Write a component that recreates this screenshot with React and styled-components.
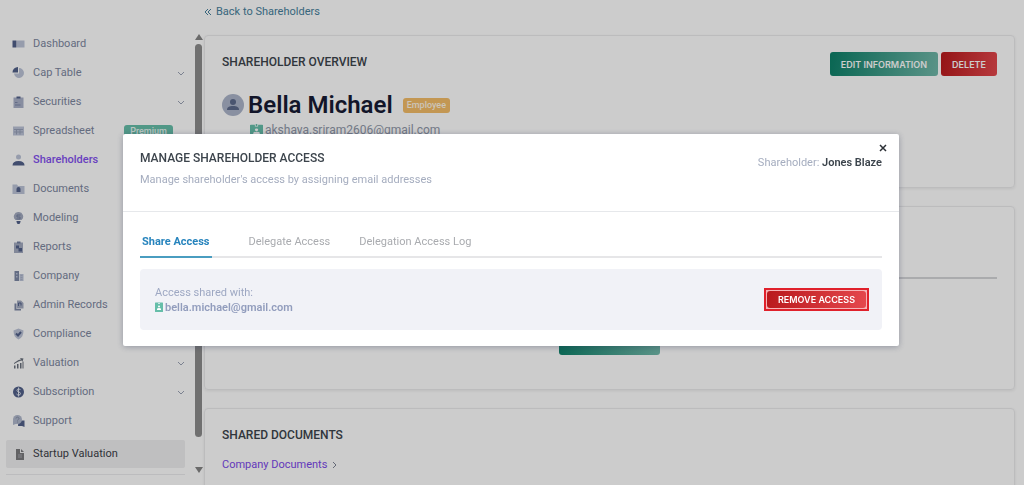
import React, { useState } from 'react';
import styled, { createGlobalStyle } from 'styled-components';

const GlobalStyle = createGlobalStyle`
  * {
    box-sizing: border-box;
  }

  body {
    margin: 0;
    background: #ffffff;
    font-family: Roboto, "Noto Sans", sans-serif;
    font-size: 11px;
    line-height: 16px;
    color: #3c444c;
  }

  button {
    font-family: inherit;
    cursor: pointer;
  }

  a {
    text-decoration: none;
  }

  h1, h2, p, ul {
    margin: 0;
    padding: 0;
  }
`;

const Page = styled.div`
  display: flex;
  height: 100vh;
  overflow: hidden;
`;

const Sidebar = styled.nav`
  flex: 0 0 194px;
  padding: 29px 9px 0 6px;
`;

const NavList = styled.ul`
  list-style: none;
`;

const NavLink = styled.a`
  display: flex;
  align-items: center;
  gap: 8px;
  height: 29px;
  padding: 0 0 0 6px;
  color: ${props => props.$active ? '#8350f0' : '#7d879f'};
  font-weight: ${props => props.$active ? 500 : 400};

  svg {
    flex: none;
  }
`;

const NavLabel = styled.span`
  flex: 1;
`;

const Premium = styled.span`
  width: 49px;
  margin-right: 12px;
  border-radius: 3px;
  background: #66bea9;
  color: #e9f7f3;
  font-size: 9px;
  font-weight: 500;
  line-height: 12px;
  text-align: center;
`;

const StartupLink = styled.a`
  display: flex;
  align-items: center;
  gap: 8px;
  height: 28px;
  margin-top: 5px;
  padding-left: 7px;
  border-radius: 2px;
  background: #efeff0;
  color: #3c4148;
`;

const SidebarRule = styled.div`
  margin-top: 6px;
  border-top: 1px solid #ececee;
`;

const Scrollbar = styled.div`
  flex: 0 0 10px;
  display: flex;
  flex-direction: column;
  align-items: center;
  gap: 3px;
  height: 474px;
  padding: 33px 1px 0 0;
`;

const Thumb = styled.div`
  flex: 1;
  width: 7px;
  margin-bottom: 26px;
  border-radius: 4px;
  background: #8c8c8c;
`;

const Main = styled.main`
  flex: 1;
  display: flex;
  flex-direction: column;
  padding-right: 9px;
`;

const BackLink = styled.a`
  flex: none;
  display: flex;
  align-items: center;
  gap: 4px;
  height: 35px;
  padding-bottom: 11px;
  color: #46809c;
`;

const Card = styled.section`
  flex: none;
  margin-bottom: 18px;
  padding: 16px 17px 0;
  min-height: ${props => props.$height}px;
  border: 1px solid #ebebed;
  border-radius: 4px;
  box-shadow: 0 1px 3px rgba(0, 0, 0, 0.08);
`;

const CardTitle = styled.h2`
  padding-top: 2px;
  font-size: 12px;
  font-weight: 500;
  line-height: 16px;
`;

const CardHeader = styled.div`
  display: flex;
  justify-content: space-between;
`;

const Actions = styled.div`
  display: flex;
  gap: 3px;
`;

const Button = styled.button`
  height: 24px;
  padding: 0 11px;
  border: 0;
  border-radius: 3px;
  background: ${props => props.$danger
    ? 'linear-gradient(100deg, #b9191c, #e5484d)'
    : 'linear-gradient(100deg, #0c8068, #72b9aa)'};
  color: #ffffff;
  font-family: Inter, sans-serif;
  font-size: 9px;
  font-weight: 600;
  text-transform: uppercase;
`;

const Person = styled.div`
  display: flex;
  align-items: center;
  gap: 4px;
  margin-top: 16px;
`;

const Name = styled.h1`
  margin-right: 6px;
  color: #171b34;
  font-size: 24px;
  font-weight: 600;
  line-height: 26px;
`;

const Tag = styled.span`
  padding: 0 4px;
  border-radius: 3px;
  background: #f4bd68;
  color: #fff6e6;
  font-size: 9px;
  font-weight: 500;
  line-height: 15px;
`;

const PersonEmail = styled.p`
  display: flex;
  align-items: center;
  gap: 2px;
  margin: 4px 0 0 28px;
  color: #8f97a8;
  font-size: 12px;
`;

const TabRule = styled.div`
  margin-top: 54px;
  border-top: 2px solid #d5d6d9;
`;

const CenteredAction = styled.div`
  display: flex;
  justify-content: center;
  margin-top: 52px;

  button {
    width: 101px;
  }
`;

const DocumentsLink = styled.a`
  display: flex;
  align-items: center;
  gap: 4px;
  margin-top: 14px;
  color: #7c48ea;
`;

const Overlay = styled.div`
  position: fixed;
  inset: 0;
  padding: 134px 125px 0 123px;
  background: rgba(0, 0, 0, 0.2);
`;

const Dialog = styled.div`
  border-radius: 2px;
  background: #ffffff;
  box-shadow: 0 1px 6px rgba(40, 50, 80, 0.35);
`;

const DialogHeader = styled.div`
  display: flex;
  justify-content: space-between;
  height: 78px;
  padding: 9px 17px 0;
  border-bottom: 1px solid #e6e8eb;
`;

const DialogTitle = styled.h2`
  padding-top: 7px;
  font-size: 12px;
  font-weight: 500;
  line-height: 16px;
`;

const Subtitle = styled.p`
  margin-top: 6px;
  color: #a5adbf;
`;

const DialogSide = styled.div`
  display: flex;
  flex-direction: column;
  align-items: flex-end;
  gap: 2px;
  color: #a5adbf;

  strong {
    color: #3c444c;
    font-weight: 600;
  }
`;

const Close = styled.button`
  display: flex;
  width: 10px;
  height: 10px;
  margin-right: -6px;
  padding: 0;
  border: 0;
  background: none;
`;

const DialogBody = styled.div`
  padding: 22px 17px 16px;
`;

const Tabs = styled.div`
  display: flex;
  gap: 25px;
  border-bottom: 2px solid #e6e6e8;
`;

const Tab = styled.button`
  height: 24px;
  margin-bottom: -2px;
  padding: 0 2px 6px;
  border: 0;
  border-bottom: 2px solid ${props => props.$active ? '#4a9dc0' : 'transparent'};
  background: none;
  color: ${props => props.$active ? '#2784bd' : '#a9abaf'};
  font-size: 11px;
  font-weight: ${props => props.$active ? 700 : 400};
  line-height: 16px;

  &:first-child {
    margin-right: 10px;
  }
`;

const AccessBox = styled.div`
  display: flex;
  align-items: center;
  justify-content: space-between;
  height: 61px;
  margin-top: 11px;
  padding: 0 13px 0 15px;
  border-radius: 4px;
  background: #f1f2f7;
  color: #9ea8c3;
`;

const AccessText = styled.p`
  line-height: 15px;
`;

const AccessEmail = styled.p`
  display: flex;
  align-items: center;
  gap: 2px;
  color: #929dbd;
  font-weight: 600;
  line-height: 15px;
`;

const Highlight = styled.div`
  display: flex;
  border: 2px solid #e0212b;
  background: #f6b4b7;
  padding: 1px;

  button {
    height: 17px;
  }
`;

const dark = '#52618a';
const light = '#bcc4d8';

const icons = {
  dashboard: <><path fill={light} d="M9 5h15v14H9z" /><path fill={dark} d="M0 5h8v14H0z" /></>,
  pie: <><path fill={light} d="M13 2a10 10 0 1 1-10 11h10z" /><path fill={dark} d="M11 0v11H0A11 11 0 0 1 11 0z" /></>,
  clipboard: <><path fill="#a9b1c8" d="M2 3h20v21H2z" /><path fill={dark} d="M8 1h8v4H8z" /><path fill="#7c88a8" d="M5 12h5v2H5zM5 17h11v2H5z" /></>,
  sheet: <><path fill={light} d="M1 3h22v18H1z" /><path stroke="#98a1b8" strokeWidth="2" fill="none" d="M3 9h18M3 14h18M8 9v10M15 9v10" /></>,
  user: <><circle fill={light} cx="12" cy="6" r="5" /><path fill={dark} d="M0 23c0-6 4-9 12-9s12 3 12 9z" /></>,
  folder: <><path fill={light} d="M0 3h9l2 3h13v16H0z" /><path fill={dark} d="M8 12a4 4 0 0 1 8 0v6H8z" /></>,
  bulb: <><path fill="#a3abc0" d="M12 0a9 9 0 0 0-6 16h12a9 9 0 0 0-6-16z" /><path fill={dark} d="M8 18h8v2l-2 4h-4l-2-4z" /><path stroke="#7480a0" strokeWidth="2" fill="none" d="M16 6H9v4h6v4H8" /></>,
  report: <><path fill="#a3abc0" d="M3 3h18v21H3z" /><path fill="#7480a0" d="M9 1h7v4H9z" /><path fill={dark} d="M7 9h6v6H7zM12 14h7v7h-7z" /></>,
  building: <><path fill="#7e89a6" d="M4 2h9v20H4z" /><path fill={light} d="M14 8h8v14h-8zM7 6h3v3H7zM7 12h3v3H7z" /><path stroke="#98a1b8" d="M16 11h4M16 15h4M16 19h4" /></>,
  records: <><path fill="#a3abc0" d="M9 3h8l5 5v11H9z" /><path fill="#7e89a6" d="M4 9h4v11h9v3H4z" /><path fill="none" stroke={dark} strokeWidth="2" d="M12 14V8h5v5" /></>,
  shield: <><path fill={light} d="M12 1l10 4c0 9-3 15-10 18C5 20 2 14 2 5z" /><path fill="none" stroke={dark} strokeWidth="4" d="M7 11l4 4 6-7" /></>,
  growth: <path fill="#6a717d" d="M3 17h3v6H3zM9 14h3v9H9zM15 12h3v11h-3zM20 9h2v14h-2zM3 12l9-6 5-1-2-3 7 1-2 6-2-2-6 2-9 5z" />,
  dollar: <><circle fill={dark} cx="12" cy="12" r="11" /><path fill="none" stroke="#dfe4ee" strokeWidth="2" d="M16 8c-1-3-7-3-7 1s7 2 7 6-6 4-8 1M12 3v18" /></>,
  chat: <><path fill={dark} d="M12 11h12v13l-5-2h-8z" /><circle fill="#b0b8cc" cx="10" cy="9" r="9" /><path fill="#b0b8cc" d="M1 10v10l8-3z" /><path fill="none" stroke="#8790a8" strokeWidth="2" d="M7 7c0-4 6-3 6 0 0 2-3 2-3 4M10 13v2" /></>,
};

const navItems = [
  { label: 'Dashboard', icon: 'dashboard' },
  { label: 'Cap Table', icon: 'pie', expands: true },
  { label: 'Securities', icon: 'clipboard', expands: true },
  { label: 'Spreadsheet', icon: 'sheet', premium: true },
  { label: 'Shareholders', icon: 'user', active: true },
  { label: 'Documents', icon: 'folder' },
  { label: 'Modeling', icon: 'bulb' },
  { label: 'Reports', icon: 'report' },
  { label: 'Company', icon: 'building' },
  { label: 'Admin Records', icon: 'records' },
  { label: 'Compliance', icon: 'shield' },
  { label: 'Valuation', icon: 'growth', expands: true },
  { label: 'Subscription', icon: 'dollar', expands: true },
  { label: 'Support', icon: 'chat' },
];

const tabs = ['Share Access', 'Delegate Access', 'Delegation Access Log'];

const NavIcon = ({ name }) => (
  <svg width="13" height="12" viewBox="0 0 24 24" aria-hidden="true">{ icons[name] }</svg>
);

const Chevron = () => (
  <svg width="8" height="8" viewBox="0 0 8 8" fill="none" stroke="#9aa2b5" aria-hidden="true">
    <path d="M1 3l3 3 3-3" />
  </svg>
);

const Badge = ({ width, height }) => (
  <svg width={ width } height={ height } viewBox="0 0 16 20" preserveAspectRatio="none" aria-hidden="true">
    <path fill="#66bea9" d="M1 1h5v3h4V1h5q1 0 1 1v17q0 1-1 1H1q-1 0-1-1V2q0-1 1-1zM7 0h2v3H7z" />
    <circle cx="8" cy="9" r="2" fill="#ffffff" />
    <path fill="#ffffff" d="M4 16v-2q0-2 4-2t4 2v2z" />
  </svg>
);

function App() {
  const [open, setOpen] = useState(true);
  const [tab, setTab] = useState(tabs[0]);

  return (
    <>
      <GlobalStyle />
      <Page>
        <Sidebar>
          <NavList>
            { navItems.map(item => (
              <li key={ item.label }>
                <NavLink href="#" $active={ item.active }>
                  <NavIcon name={ item.icon } />
                  <NavLabel>{ item.label }</NavLabel>
                  { item.expands && <Chevron /> }
                  { item.premium && <Premium>Premium</Premium> }
                </NavLink>
              </li>
            )) }
          </NavList>
          <StartupLink href="#">
            <svg width="12" height="12" viewBox="0 0 12 12" aria-hidden="true">
              <path fill="#7b7b7e" d="M3 1h4v4h4v7H3z" />
              <path fill="#7b7b7e" d="M8 1l3 3H8z" />
              <path stroke="#aaaaae" d="M5 7h4M5 9h4" />
            </svg>
            Startup Valuation
          </StartupLink>
          <SidebarRule />
        </Sidebar>

        <Scrollbar aria-hidden="true">
          <svg width="8" height="8" viewBox="0 0 8 8"><path fill="#858585" d="M4 1l4 6H0z" /></svg>
          <Thumb />
          <svg width="8" height="8" viewBox="0 0 8 8"><path fill="#858585" d="M4 7L0 1h8z" /></svg>
        </Scrollbar>

        <Main>
          <BackLink href="#">
            <svg width="8" height="8" viewBox="0 0 8 8" fill="none" stroke="currentColor" aria-hidden="true">
              <path d="M4 1L1 4l3 3M7 1L4 4l3 3" />
            </svg>
            Back to Shareholders
          </BackLink>

          <Card $height={ 153 }>
            <CardHeader>
              <CardTitle>SHAREHOLDER OVERVIEW</CardTitle>
              <Actions>
                <Button>Edit Information</Button>
                <Button $danger>Delete</Button>
              </Actions>
            </CardHeader>
            <Person>
              <svg width="22" height="22" viewBox="0 0 22 22" aria-hidden="true">
                <circle cx="11" cy="11" r="11" fill="#acb5ca" />
                <circle cx="11" cy="8" r="3" fill="#5d6b8c" />
                <path fill="#5d6b8c" d="M5 16c0-3 2-4 6-4s6 1 6 4z" />
              </svg>
              <Name>Bella Michael</Name>
              <Tag>Employee</Tag>
            </Person>
            <PersonEmail>
              <Badge width={ 13 } height={ 13 } />
              akshaya.sriram2606@gmail.com
            </PersonEmail>
          </Card>

          <Card $height={ 184 }>
            <TabRule />
            <CenteredAction>
              <Button aria-label="Manage access" />
            </CenteredAction>
          </Card>

          <Card $height={ 120 }>
            <CardTitle>SHARED DOCUMENTS</CardTitle>
            <DocumentsLink href="#">
              Company Documents
              <svg width="8" height="8" viewBox="0 0 8 8" fill="none" stroke="#7d8494" aria-hidden="true">
                <path d="M2 1l3 3-3 3" />
              </svg>
            </DocumentsLink>
          </Card>
        </Main>
      </Page>

      { open && (
        <Overlay>
          <Dialog role="dialog" aria-labelledby="dialog-title">
            <DialogHeader>
              <div>
                <DialogTitle id="dialog-title">MANAGE SHAREHOLDER ACCESS</DialogTitle>
                <Subtitle>Manage shareholder's access by assigning email addresses</Subtitle>
              </div>
              <DialogSide>
                <Close aria-label="Close" onClick={ () => setOpen(false) }>
                  <svg width="10" height="10" viewBox="0 0 10 10" stroke="#2c3036" strokeWidth="1.5">
                    <path d="M2 2l6 6M8 2L2 8" />
                  </svg>
                </Close>
                <span>Shareholder: <strong>Jones Blaze</strong></span>
              </DialogSide>
            </DialogHeader>
            <DialogBody>
              <Tabs role="tablist">
                { tabs.map(name => (
                  <Tab key={ name } role="tab" $active={ tab === name } onClick={ () => setTab(name) }>
                    { name }
                  </Tab>
                )) }
              </Tabs>
              <AccessBox>
                <div>
                  <AccessText>Access shared with:</AccessText>
                  <AccessEmail>
                    <Badge width={ 8 } height={ 10 } />
                    bella.michael@gmail.com
                  </AccessEmail>
                </div>
                <Highlight>
                  <Button $danger>Remove Access</Button>
                </Highlight>
              </AccessBox>
            </DialogBody>
          </Dialog>
        </Overlay>
      ) }
    </>
  );
}

export default App;
